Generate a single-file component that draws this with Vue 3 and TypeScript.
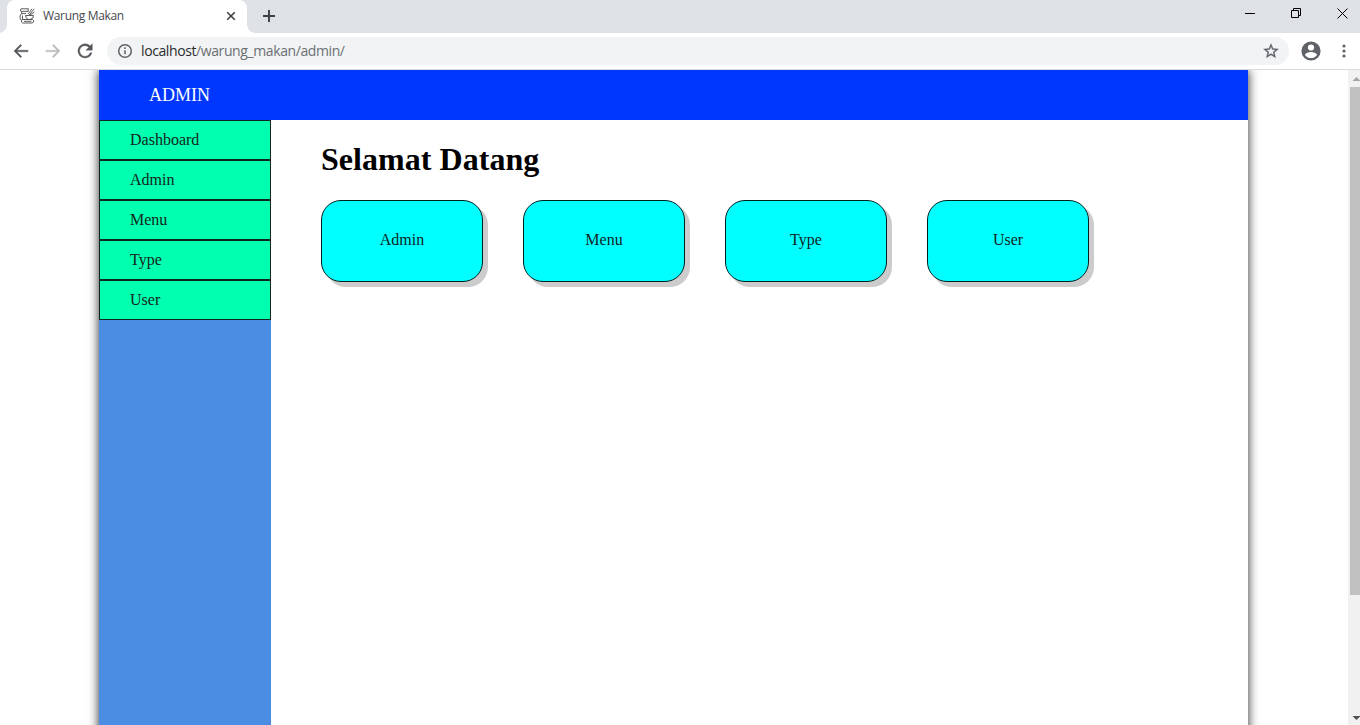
<script setup lang="ts">
const links: string[] = ['Dashboard', 'Admin', 'Menu', 'Type', 'User']
const cards: string[] = ['Admin', 'Menu', 'Type', 'User']
</script>

<template>
  <div class="browser">
    <div class="tabs">
      <div class="tab">
        <svg class="favicon" width="16" height="16" viewBox="0 0 16 16" fill="none" stroke="#4a4a4a" stroke-width=".9" stroke-linejoin="round">
          <path d="M2 .8h7.500M2 .8q-1.400 1.300 0 2.600h7.200V.8M2.600 3.400v2.200Q1 7 1 9t1 3.200M2.600 5.600h4.500M3.500 7.500v4M15.300.8 10.200 7M13 .8 9.200 6M15.500 4l-4.500 3M6.500 7.500h8q0 3.500-3.500 4H9.500Q7 11 6.500 7.500M2.500 12.500q0-1 1.500-1h9.500l1.500 1.500-1.500 2h-10q-1.500-.5-1-2.500M5 13.300h7.500" />
        </svg>
        <span class="title">Warung Makan</span>
        <svg class="close" width="10" height="10" viewBox="0 0 10 10" stroke="#3c4043" stroke-width="1.6"><path d="M1.200 1.200 8.800 8.800M8.800 1.200 1.200 8.800" /></svg>
      </div>
      <svg class="plus" width="12" height="12" viewBox="0 0 12 12" stroke="#3c4043" stroke-width="1.9"><path d="M6 0v12M0 6h12" /></svg>
      <div class="controls">
        <svg width="10" height="11" viewBox="0 0 10 11" stroke="#000"><path d="M0 5.500h10" /></svg>
        <svg width="10" height="11" viewBox="0 0 10 11" stroke="#000" fill="none"><path d="M.5 2.500h7v7h-7zM2.500 2.500v-2h7v7h-2" /></svg>
        <svg width="11" height="11" viewBox="0 0 11 11" stroke="#000"><path d="M.5.5l10 10M10.500.5l-10 10" /></svg>
      </div>
    </div>

    <div class="toolbar">
      <svg class="nav" width="20" height="20" viewBox="0 0 24 24" fill="#54575b" stroke="#54575b" stroke-width=".4"><path d="M20.500 11H7.200l5.700-5.700L11.500 4l-8 8 8 8 1.400-1.400L7.200 13h13.300z" /></svg>
      <svg class="nav" width="20" height="20" viewBox="0 0 24 24" fill="#b9bbbd" stroke="#b9bbbd" stroke-width=".4"><path d="M3.500 11h13.300l-5.700-5.700L12.500 4l8 8-8 8-1.400-1.400 5.700-5.600H3.500z" /></svg>
      <svg class="nav" width="20" height="20" viewBox="0 0 24 24" fill="#54575b" stroke="#54575b" stroke-width=".4"><path d="M18.200 5.800A8.600 8.600 0 1 0 20.400 14h-2.300a6.400 6.400 0 1 1-1.500-6.500L13 11h7.800V3.200z" /></svg>
      <div class="address">
        <svg width="16" height="16" viewBox="0 0 16 16" fill="none" stroke="#5f6368" stroke-width="1.500"><circle cx="8" cy="8" r="6.300" /><path d="M8 7.200v4M8 4.300v1.600" /></svg>
        <span class="url"><b>localhost</b>/warung_makan/admin/</span>
        <svg class="star" width="18" height="18" viewBox="0 0 24 24" fill="#5f6368" stroke="#5f6368" stroke-width=".4"><path d="M22 9.240l-7.190-.62L12 2 9.190 8.630 2 9.240l5.460 4.730L5.820 21 12 17.270 18.180 21l-1.630-7.030zM12 15.400l-3.760 2.270 1-4.280-3.320-2.880 4.380-.38L12 6.100l1.710 4.040 4.380.38-3.320 2.880 1 4.280z" /></svg>
      </div>
      <svg class="profile" width="24" height="24" viewBox="0 0 24 24" fill="#5f6368"><path d="M12 2.400a9.600 9.600 0 1 0 0 19.200 9.600 9.600 0 0 0 0-19.200zm0 3a3.100 3.100 0 1 1 0 6.200 3.100 3.100 0 0 1 0-6.200zm0 13.700c-2.500 0-4.700-1.200-6-3.100.1-1.900 4-2.900 6-2.900s5.900 1 6 2.900c-1.300 1.900-3.500 3.100-6 3.100z" /></svg>
      <svg class="more" width="4" height="14" viewBox="0 0 4 14" fill="#5f6368"><circle cx="2" cy="2" r="1.600" /><circle cx="2" cy="7" r="1.600" /><circle cx="2" cy="12" r="1.600" /></svg>
    </div>

    <div class="viewport">
      <div class="page">
        <header>ADMIN</header>
        <div class="body">
          <nav class="sidebar">
            <a v-for="link in links" :key="link">{{ link }}</a>
          </nav>
          <main>
            <h1>Selamat Datang</h1>
            <div class="cards">
              <div v-for="card in cards" :key="card" class="card">{{ card }}</div>
            </div>
          </main>
        </div>
      </div>
      <div class="scrollbar">
        <svg width="12" height="17" viewBox="0 0 12 17" fill="#a3a3a3"><path d="M4.500 11h8L8.500 7z" /></svg>
        <div class="thumb"></div>
        <svg class="down" width="12" height="17" viewBox="0 0 12 17" fill="#505050"><path d="M4.500 8h8l-4 4z" /></svg>
      </div>
    </div>
  </div>
</template>

<style>
body { margin: 0; overflow: hidden; }
</style>

<style scoped>
* { box-sizing: border-box; }
svg { display: block; flex: none; }
.browser { width: 1360px; height: 725px; overflow: hidden; display: flex; flex-direction: column; background: #fff; font-family: "Open Sans", "Noto Sans", sans-serif; }
.tabs { height: 33px; flex: none; display: flex; background: #dee1e6; }
.tab { width: 240px; height: 33px; margin-left: 7px; padding: 0 11px 0 12px; display: flex; align-items: center; background: #fff; border-radius: 8px 8px 0 0; position: relative; }
.tab::before, .tab::after { content: ""; position: absolute; bottom: 0; width: 8px; height: 8px; }
.tab::before { left: -8px; background: radial-gradient(circle at 0 0, transparent 7.5px, #fff 8px); }
.tab::after { right: -8px; background: radial-gradient(circle at 100% 0, transparent 7.5px, #fff 8px); }
.favicon { margin-top: -1px; }
.title { margin: -2px 0 0 8px; font-size: 12px; line-height: 16px; letter-spacing: -0.33px; color: #45484c; white-space: nowrap; }
.close { margin: -1px 0 0 auto; }
.plus { margin: 10px 0 0 16px; }
.controls { margin: 8px 12px 0 auto; display: flex; gap: 36px; }
.toolbar { height: 37px; flex: none; display: flex; align-items: center; padding: 0 14px 0 11px; border-bottom: 1px solid #d8dadd; }
.nav { margin-right: 12px; }
.address { width: 1182px; height: 28px; border-radius: 14px; background: #f1f3f4; display: flex; align-items: center; padding: 0 9px 0 10px; }
.url { margin-left: 8px; font-size: 14px; line-height: 20px; letter-spacing: -0.4px; color: #6b6f73; white-space: nowrap; }
.url b { font-weight: 400; color: #292b2e; }
.star { margin-left: auto; }
.profile { margin-left: 10px; }
.more { margin-left: auto; }
.viewport { flex: 1; min-height: 0; display: flex; justify-content: space-between; overflow: hidden; font-family: "Liberation Serif", "Times New Roman", serif; font-size: 16px; }
.page { width: 1149px; margin: 0 0 -30px 99px; display: flex; flex-direction: column; box-shadow: 0 0 10px rgba(0, 0, 0, .85); }
header { height: 50px; flex: none; padding-left: 50px; line-height: 50px; font-size: 18px; color: #fff; background: #0037ff; }
.body { flex: 1; display: flex; }
.sidebar { width: 172px; background: #4a8de2; }
.sidebar a { display: block; height: 40px; padding-left: 30px; line-height: 38px; color: #15251c; background: #00ffae; border: 1px solid #10251b; }
main { flex: 1; padding: 19px 50px; background: #fff; }
h1 { margin: 0; height: 40px; line-height: 40px; font-size: 32px; letter-spacing: .04px; color: #000; }
.cards { margin-top: 21px; display: flex; gap: 40px; }
.card { width: 162px; height: 82px; line-height: 78px; text-align: center; color: #102525; background: #0ff; border: 1px solid #002020; border-radius: 20px; box-shadow: 5px 5px #ccc; }
.scrollbar { width: 12px; display: flex; flex-direction: column; background: #f1f1f1; }
.thumb { height: 508px; margin-left: 2px; background: #c1c1c1; }
.down { margin-top: auto; }
</style>
